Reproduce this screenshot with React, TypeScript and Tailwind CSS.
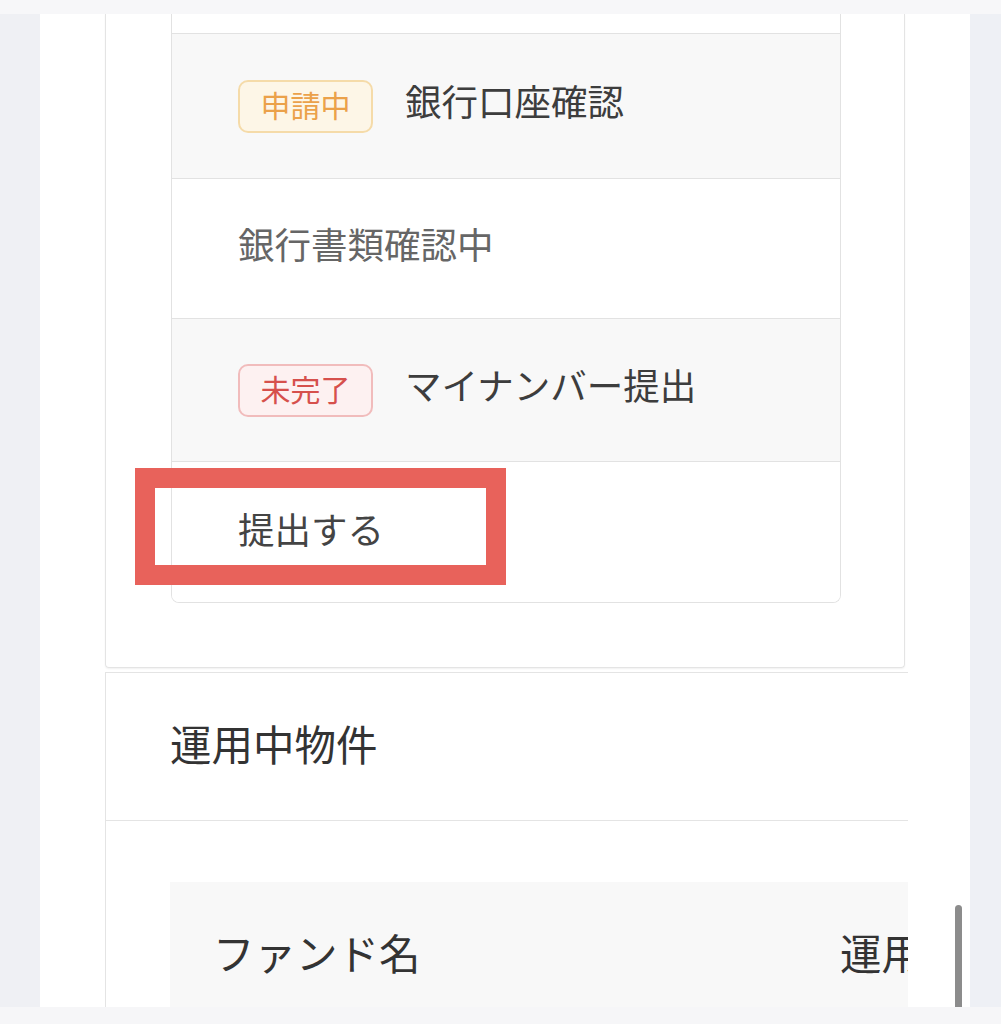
import React from "react";

const font = { fontFamily: '"Noto Sans CJK JP", "Noto Sans", sans-serif' };

function Badge({ label, tone }: { label: string; tone: "orange" | "red" }) {
  const cls =
    tone === "orange"
      ? "bg-[#fdf6e7] border-[#f5dba9] text-[#eba14a]"
      : "bg-[#fdf1f1] border-[#f1bcbc] text-[#d6504c]";
  return (
    <div
      className={`w-[135px] h-[53px] shrink-0 rounded-[10px] border-2 flex items-center justify-center text-[30px] leading-none pb-[5px] ${cls}`}
    >
      {label}
    </div>
  );
}

export default function App() {
  return (
    <div
      className="w-[1001px] h-[1024px] flex flex-col bg-[#f6f6f8] overflow-hidden"
      style={font}
    >
      <div className="h-[14px] shrink-0 bg-[#f7f7f9]" />
      <div className="flex h-[993px] shrink-0">
        <div className="w-[40px] shrink-0 bg-[#eff0f4]" />
        <div className="relative w-[930px] shrink-0 bg-white pl-[65px] flex flex-col overflow-hidden">
          {/* Card 1 */}
          <div className="relative w-[800px] h-[654px] shrink-0 border-x border-b border-[#e4e4e4] rounded-b-[4px] shadow-[0_1px_2px_rgba(0,0,0,0.06)] pl-[65px]">
            <div className="w-[670px] flex flex-col border-x border-b border-[#e2e2e2] rounded-b-[8px] overflow-hidden">
              <div className="h-[20px] bg-white border-b border-[#e2e2e2]" />
              <div className="h-[145px] bg-[#f8f8f8] border-b border-[#e2e2e2] flex items-center pl-[66px] gap-[32px]">
                <Badge label="申請中" tone="orange" />
                <span className="text-[36.5px] text-[#3d3d3d] leading-none pb-[9px]">銀行口座確認</span>
              </div>
              <div className="h-[140px] bg-white border-b border-[#e2e2e2] flex items-center pl-[66px]">
                <span className="text-[36.5px] text-[#666666] leading-none pb-[8px]">銀行書類確認中</span>
              </div>
              <div className="h-[143px] bg-[#f8f8f8] border-b border-[#e2e2e2] flex items-center pl-[66px] gap-[32px]">
                <Badge label="未完了" tone="red" />
                <span className="text-[36.5px] text-[#3d3d3d] leading-none pb-[10px]">マイナンバー提出</span>
              </div>
              <div className="h-[140px] bg-white flex items-center pl-[66px]">
                <span className="text-[36.5px] text-[#444444] leading-none pb-[6px]">提出する</span>
              </div>
            </div>
            {/* Annotation highlight */}
            <div className="absolute left-[29px] top-[454px] w-[371px] h-[117px] border-[20px] border-[#e8625b]" />
          </div>

          {/* Card 2 */}
          <div className="mt-[4px] w-[803px] shrink-0 flex-1 border-l border-t border-[#e4e4e4] overflow-hidden flex flex-col">
            <div className="h-[148px] shrink-0 border-b border-[#e4e4e4] flex items-center pl-[64px]">
              <span className="text-[41.5px] text-[#333333] leading-none pb-[6px]">運用中物件</span>
            </div>
            <div className="pt-[61px] pl-[64px]">
              <div className="w-[1200px] h-[146px] bg-[#f8f8f8] flex items-center">
                <div className="w-[670px] shrink-0 pl-[43px] text-[41.5px] text-[#333333] leading-none pb-[4px]">
                  ファンド名
                </div>
                <div className="text-[41.5px] text-[#333333] leading-none whitespace-nowrap pb-[4px]">
                  運用状況
                </div>
              </div>
            </div>
          </div>

          {/* scroll indicator */}
          <div className="absolute left-[915px] top-[891px] w-[7px] h-[110px] rounded-full bg-[#8c8c8c]" />
        </div>
        <div className="w-[31px] shrink-0 bg-[#eef0f5]" />
      </div>
      <div className="h-[17px] shrink-0 bg-[#f6f6f8]" />
    </div>
  );
}
